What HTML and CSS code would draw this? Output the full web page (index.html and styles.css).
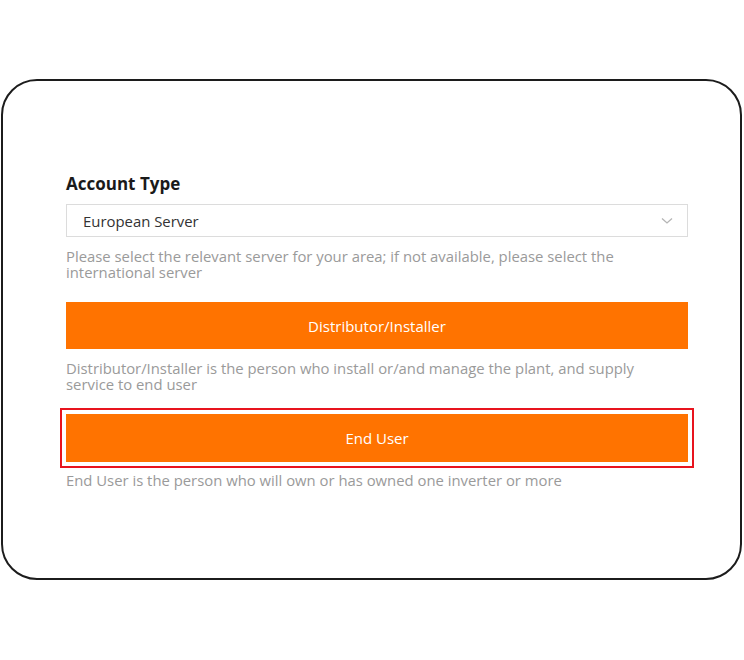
FILE: index.html
```html
<!DOCTYPE html>
<html>
<head>
<meta charset="utf-8">
<link rel="stylesheet" href="styles.css">
</head>
<body>
<div class="frame">
  <div class="content">
    <h2 class="title">Account Type</h2>
    <div class="select">
      <span>European Server</span>
      <svg class="chev" width="12" height="8" viewBox="0 0 12 8"><path d="M1 1.5 L6 6 L11 1.5" fill="none" stroke="#b5b5b5" stroke-width="1.3"/></svg>
    </div>
    <p class="hint">Please select the relevant server for your area; if not available, please select the international server</p>
    <div class="btn">Distributor/Installer</div>
    <p class="hint">Distributor/Installer is the person who install or/and manage the plant, and supply service to end user</p>
    <div class="btn highlighted">End User</div>
    <p class="hint last">End User is the person who will own or has owned one inverter or more</p>
  </div>
</div>
</body>
</html>
```
FILE: styles.css
```css
html, body {
  margin: 0;
  padding: 0;
  background: #fff;
}
body {
  font-family: "Open Sans", "Noto Sans", sans-serif;
  width: 744px;
  height: 660px;
}
.frame {
  margin: 79px 0 0 1px;
  width: 741px;
  height: 501px;
  box-sizing: border-box;
  border: 2px solid #1c1c1c;
  border-radius: 36px;
}
.content {
  padding: 91px 0 0 63px;
  width: 622px;
}
.title {
  margin: 0;
  font-size: 17px;
  line-height: 24px;
  font-weight: 700;
  color: #1a1a1a;
}
.select {
  margin-top: 8px;
  height: 33px;
  box-sizing: border-box;
  border: 1px solid #dcdcdc;
  display: flex;
  align-items: center;
  justify-content: space-between;
  padding: 0 14px 0 16px;
  font-size: 14.9px;
  color: #333;
}
.hint {
  margin: 11px 0 0;
  padding-right: 14px;
  font-size: 14.85px;
  line-height: 16px;
  color: #9a9a9a;
}
.hint.last {
  margin-top: 10px;
}
.btn {
  height: 47px;
  background: #ff7300;
  color: #fff;
  font-size: 15px;
  display: flex;
  align-items: center;
  justify-content: center;
  margin-top: 22px;
}
.btn.highlighted {
  height: 48px;
  outline: 2px solid #e8141e;
  outline-offset: 4px;
}
```
